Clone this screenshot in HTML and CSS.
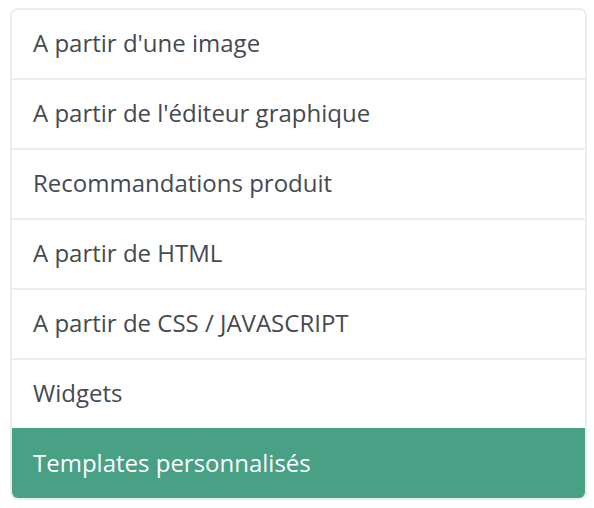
FILE: index.html
```html
<!DOCTYPE html>
<html>
<head>
<meta charset="utf-8">
<link rel="stylesheet" href="styles.css">
</head>
<body>
<div class="list">
  <div class="item">A partir d'une image</div>
  <div class="item">A partir de l'éditeur graphique</div>
  <div class="item">Recommandations produit</div>
  <div class="item">A partir de HTML</div>
  <div class="item">A partir de CSS / JAVASCRIPT</div>
  <div class="item">Widgets</div>
  <div class="item active">Templates personnalisés</div>
</div>
</body>
</html>
```
FILE: styles.css
```css
html, body { margin: 0; padding: 0; background: #fff; }
body { padding: 8px 7px 0 10px; }
.list {
  border: 2px solid #ececec;
  border-radius: 8px;
  overflow: hidden;
  font-family: "Open Sans", "Liberation Sans", sans-serif;
}
.item {
  box-sizing: border-box;
  height: 70px;
  display: flex;
  align-items: center;
  padding: 0 0 3px 21px;
  font-size: 24px;
  color: #454a50;
  background: #fff;
  border-top: 2px solid #ececec;
}
.item:first-child { border-top: 0; height: 68px; }
.item.active {
  background: #48a085;
  color: #fff;
  border-top-color: #48a085;
}
```
